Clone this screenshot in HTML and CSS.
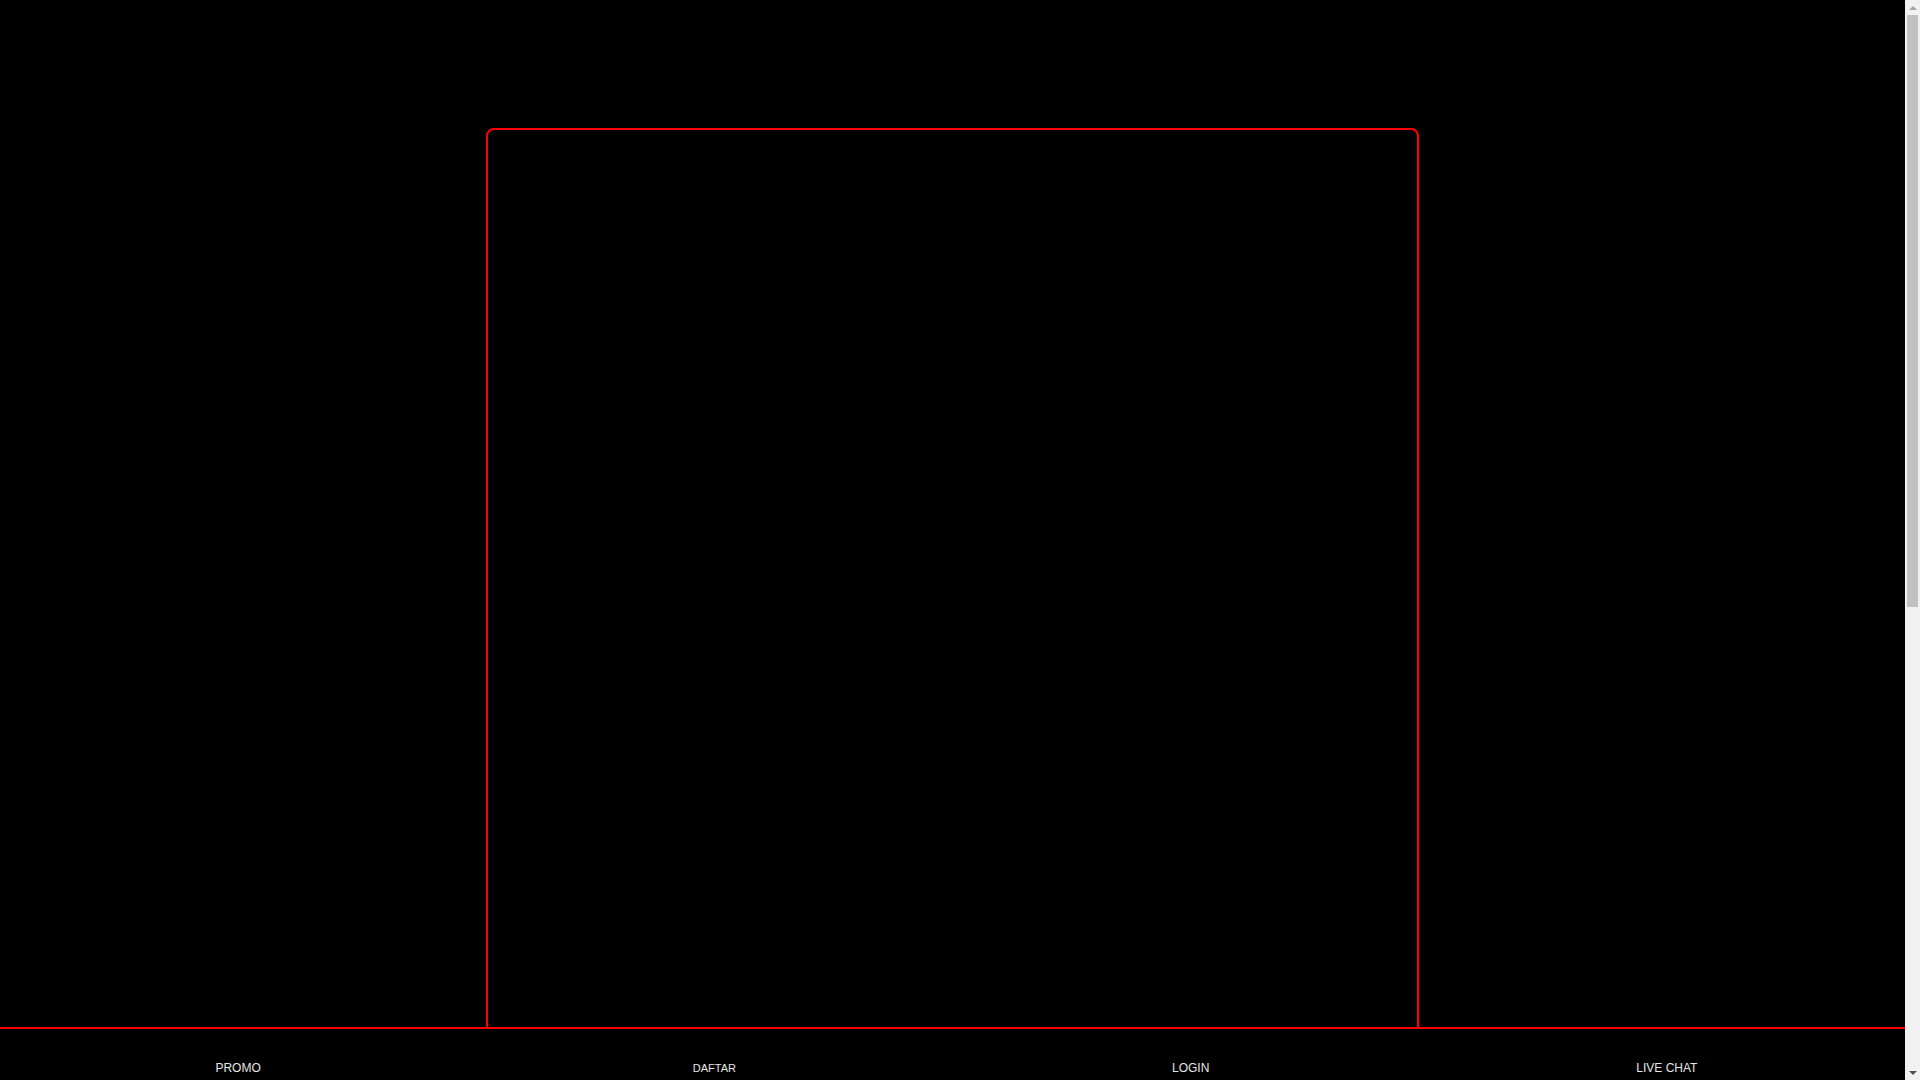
FILE: index.html
```html
<!DOCTYPE html>
<html lang="id">
<head>
<meta charset="utf-8">
<title>Page</title>
<link rel="stylesheet" href="styles.css">
</head>
<body>
<main class="page">
  <section class="frame"></section>
</main>
<nav class="bottom-nav">
  <a class="nav-item" href="#">PROMO</a>
  <a class="nav-item nav-item-small" href="#">DAFTAR</a>
  <a class="nav-item" href="#">LOGIN</a>
  <a class="nav-item" href="#">LIVE CHAT</a>
</nav>
<div class="scrollbar" aria-hidden="true">
  <div class="sb-btn"><span class="sb-arrow up"></span></div>
  <div class="sb-track"><div class="sb-thumb"></div></div>
  <div class="sb-btn"><span class="sb-arrow down"></span></div>
</div>
</body>
</html>
```
FILE: styles.css
```css
html, body {
  margin: 0;
  padding: 0;
  background: #000;
  font-family: "Liberation Sans", Arial, sans-serif;
}

body {
  margin-right: 15px;
}

.page {
  padding: 128px 0 55px;
}

.frame {
  box-sizing: border-box;
  width: 933px;
  height: 1732px;
  margin: 0 auto;
  border: 2px solid #ff0000;
  border-radius: 8px;
}

.bottom-nav {
  position: fixed;
  left: 0;
  right: 15px;
  bottom: 0;
  height: 51px;
  border-top: 2px solid #ff0000;
  background: #000;
  display: grid;
  grid-template-columns: repeat(4, 1fr);
  z-index: 10;
}

.nav-item {
  display: flex;
  align-items: flex-end;
  justify-content: center;
  padding-bottom: 5px;
  color: #e6e6e6;
  font-size: 12px;
  text-decoration: none;
}

.nav-item-small {
  font-size: 11px;
  padding-bottom: 6px;
}

/* browser scrollbar look-alike */
.scrollbar {
  position: fixed;
  top: 0;
  right: 0;
  bottom: 0;
  width: 15px;
  background: #f1f1f1;
  display: flex;
  flex-direction: column;
  z-index: 20;
}

.sb-btn {
  height: 15px;
  display: flex;
  align-items: center;
  justify-content: center;
}

.sb-arrow {
  width: 0;
  height: 0;
  border-left: 4px solid transparent;
  border-right: 4px solid transparent;
}

.sb-arrow.up {
  border-bottom: 4px solid #a3a3a3;
}

.sb-arrow.down {
  border-top: 4px solid #505050;
}

.sb-track {
  flex: 1;
  padding: 0 2px;
}

.sb-thumb {
  height: 592px;
  background: #c1c1c1;
}
```
